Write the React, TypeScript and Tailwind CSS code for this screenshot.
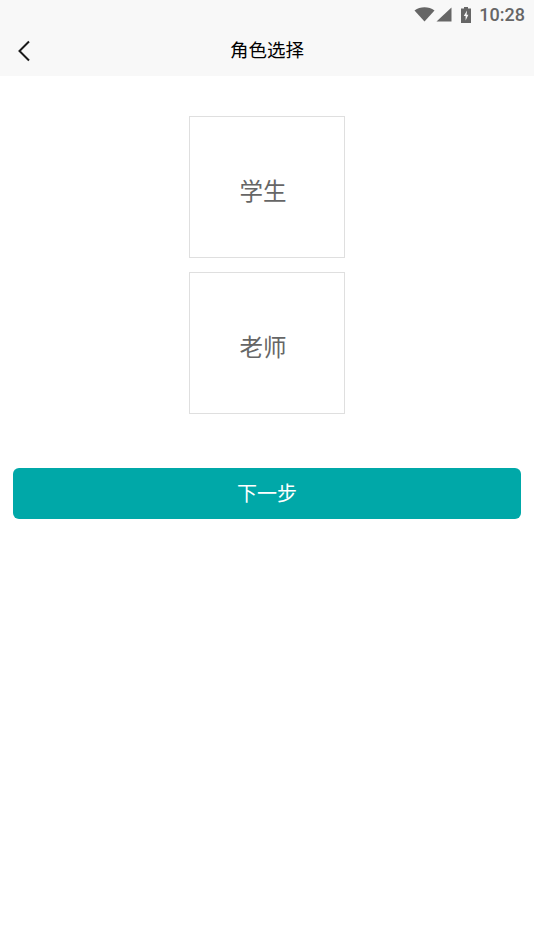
function StatusBar() {
  return (
    <div className="flex h-7 items-center justify-end pr-[9px] pt-[1px]">
      <svg width="21" height="15" viewBox="0 0 21 15">
        <path d="M0.5 3.5C3.5 1.2 6.8 0.3 10.5 0.3C14.2 0.3 17.5 1.2 20.5 3.5L10.5 14.5Z" fill="#666666" />
      </svg>
      <svg width="16" height="15" viewBox="0 0 16 15" className="ml-[1px]">
        <path d="M15.5 0.5V14.5H0.5Z" fill="#666666" />
      </svg>
      <svg width="12" height="16" viewBox="0 0 12 16" className="ml-[8px]">
        <path fillRule="evenodd" d="M4 0H8V1.5H11V16H1V1.5H4ZM7 3.5L3.8 9H5.6V13.5L8.4 7.8H6.6Z" fill="#666666" />
      </svg>
      <span className="ml-[7px] font-['Roboto',sans-serif] text-[18px] font-medium leading-none text-[#666666]">10:28</span>
    </div>
  );
}

function RoleCard({ label }: { label: string }) {
  return (
    <div className="flex h-[142px] w-[156px] items-center justify-center border border-[#dfdfdf] bg-white">
      <span className="mt-[7px] mr-[8px] text-[23.5px] leading-none text-[#666666]">{label}</span>
    </div>
  );
}

export default function App() {
  return (
    <div className="min-h-[950px] w-[534px] bg-white font-['Noto_Sans_CJK_SC','Noto_Sans',sans-serif]">
      <div className="bg-[#f8f8f8]">
        <StatusBar />
        <div className="relative flex h-[48px] items-center justify-center">
          <svg width="14" height="22" viewBox="0 0 14 22" className="absolute left-[17px] top-[12px]">
            <path d="M12 1.5L2.5 11L12 20.5" fill="none" stroke="#1a1a1a" strokeWidth="2" />
          </svg>
          <span className="mb-[6px] text-[18.5px] leading-none text-black">角色选择</span>
        </div>
      </div>

      <div className="mt-10 flex flex-col items-center gap-[14px]">
        <RoleCard label="学生" />
        <RoleCard label="老师" />
      </div>

      <div className="mt-[54px] px-[13px]">
        <button className="flex h-[51px] w-full items-center justify-center rounded-[6px] bg-[#00a8a8] pb-[2px] text-[20px] text-white">
          下一步
        </button>
      </div>
    </div>
  );
}
